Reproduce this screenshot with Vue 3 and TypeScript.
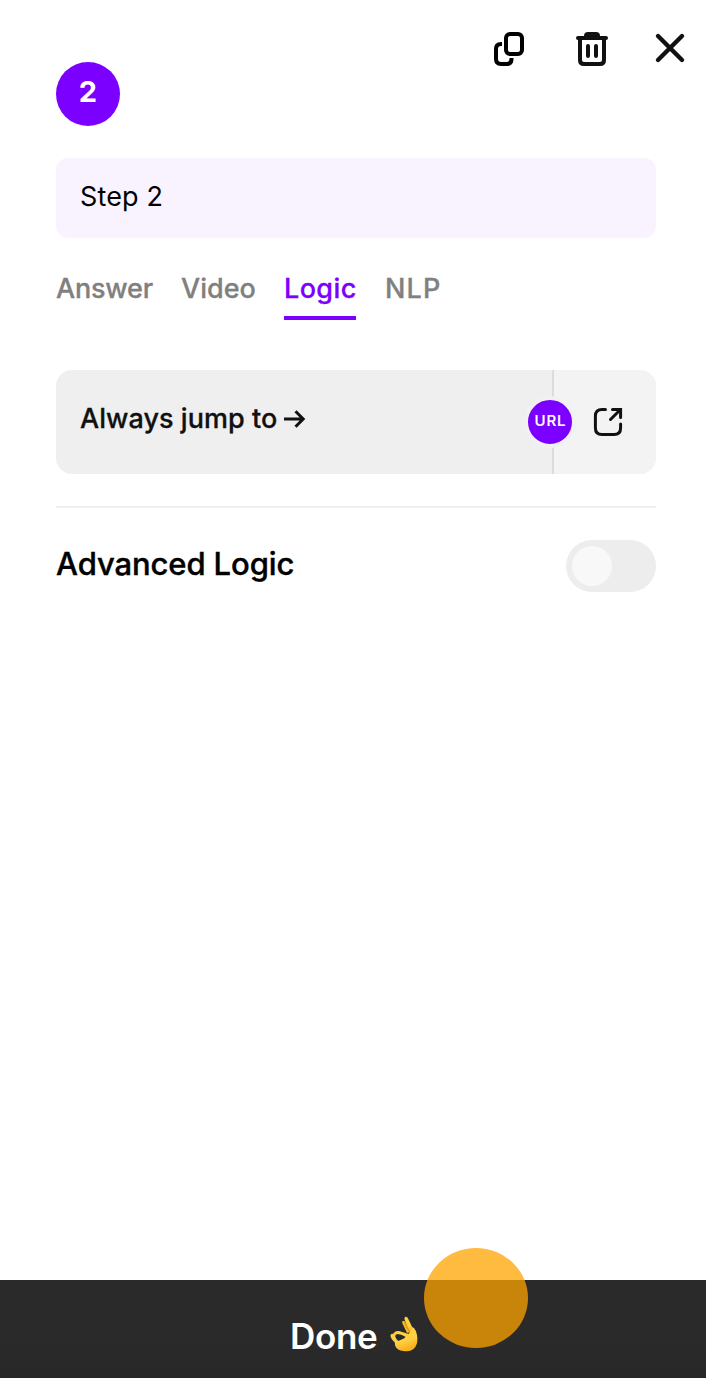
<script setup lang="ts">
import { ref } from 'vue'

const tabs = ['Answer', 'Video', 'Logic', 'NLP']
const activeTab = ref('Logic')
const stepName = ref('Step 2')
const advanced = ref(false)
</script>

<template>
  <main class="panel">
    <header class="toolbar">
      <button class="tool copy" aria-label="Duplicate">
        <svg width="32" height="36" viewBox="0 0 32 36" fill="none" stroke="#000" stroke-width="4">
          <rect x="13" y="3" width="16" height="20" rx="4" />
          <path d="M9 13H8Q3 13 3 18V28Q3 33 8 33H13.5Q18.5 33 18.5 28V27" />
        </svg>
      </button>
      <button class="tool trash" aria-label="Delete">
        <svg width="32" height="36" viewBox="0 0 32 36" fill="none" stroke="#111" stroke-width="4">
          <path d="M8 5Q8 1 12 1H20Q24 1 24 5V8H8Z" fill="#111" stroke="none" />
          <path d="M2 7H30" stroke-linecap="round" />
          <path d="M4 7V29Q4 33 8 33H24Q28 33 28 29V7" />
          <path d="M12 15V25M20 15V25" stroke-linecap="round" />
        </svg>
      </button>
      <button class="tool close" aria-label="Close">
        <svg width="32" height="32" viewBox="0 0 32 32" fill="none" stroke="#111" stroke-width="4.4" stroke-linecap="round">
          <path d="M4 4L28 28M28 4L4 28" />
        </svg>
      </button>
    </header>

    <section class="content">
      <div class="step-number"><span>2</span></div>
      <div class="step-name"><span>{{ stepName }}</span></div>

      <nav class="tabs">
        <button
          v-for="tab in tabs"
          :key="tab"
          class="tab"
          :class="[tab.toLowerCase(), { active: tab === activeTab }]"
          @click="activeTab = tab"
        >{{ tab }}</button>
      </nav>

      <div class="jump">
        <div class="jump-label">
          <span>Always jump to</span>
          <svg width="22" height="20" viewBox="0 0 22 20" fill="none" stroke="#111" stroke-width="3">
            <path d="M0 10H19M11.5 2.3L19.2 10L11.5 17.7" />
          </svg>
        </div>
        <div class="jump-target">
          <span class="url"><span>URL</span></span>
          <svg class="external" width="32" height="32" viewBox="0 0 32 32" fill="none" stroke="#111" stroke-width="3" stroke-linecap="round">
            <path d="M13.5 3.4H10Q3.4 3.4 3.4 10V22Q3.4 28.6 10 28.6H22Q28.6 28.6 28.6 22V18" />
            <path d="M20.5 3.4H28.6V11.5M28 4L18.5 13.5" />
          </svg>
        </div>
      </div>

      <div class="advanced">
        <span class="advanced-label">Advanced Logic</span>
        <button class="switch" role="switch" :aria-checked="advanced" aria-label="Advanced Logic" @click="advanced = !advanced">
          <span class="knob"></span>
        </button>
      </div>
    </section>

    <footer class="done">
      <span class="done-label">Done</span>
      <svg class="hand" width="28" height="36" viewBox="0 0 28 36">
        <defs>
          <linearGradient id="skin" x1="0" y1="0" x2="0.4" y2="1">
            <stop offset="0" stop-color="#ffd238" />
            <stop offset="0.65" stop-color="#ffd044" />
            <stop offset="1" stop-color="#f9b01f" />
          </linearGradient>
        </defs>
        <path d="M17 17L12.2 7Q11.6 5 13.2 4.8Q14.6 4.8 16 7L21 16Z" fill="#f5b622" />
        <path d="M20.5 17L14.7 4Q14 1 15.8.8Q17.5.6 18.8 4L25 17Z" fill="url(#skin)" />
        <path
          fill="url(#skin)"
          fill-rule="evenodd"
          d="M18.5 18Q21.5 15 21.5 12Q22 10.5 24 12Q26.5 15 27 19Q28 25 26.5 28.5Q24.5 35 17 35.2Q10 35.5 6.5 32Q4.8 30 4.8 26.5Q.5 22.5 .5 19.5Q.8 17.4 3 18Q5 14.5 9 15L18.5 18ZM7.5 18Q5 18.2 5.2 20.2Q5.8 23 8.4 25L11.5 23.5Q14.5 23 15.5 20.8Q11 18 7.5 18Z"
        />
        <path d="M14.7 6.5L19.5 16M3.4 18.2Q4 17 4.5 16.6" stroke="#df8a14" stroke-width="1" fill="none" />
      </svg>
      <span class="pointer"></span>
    </footer>
  </main>
</template>

<style>
body {
  margin: 0;
  background: #fff;
}
</style>

<style scoped>
.panel {
  width: 706px;
  height: 1378px;
  display: flex;
  flex-direction: column;
  overflow: hidden;
  background: #fff;
  color: #000;
  font-family: Inter, "Liberation Sans", sans-serif;
}
button {
  border: 0;
  padding: 0;
  margin: 0;
  background: none;
  font: inherit;
  color: inherit;
}
svg {
  display: block;
  flex: none;
}
.toolbar {
  height: 62px;
  box-sizing: border-box;
  padding: 31px 20px 0 0;
  display: flex;
  justify-content: flex-end;
  align-items: flex-start;
}
.copy {
  margin-right: 51px;
}
.trash {
  margin-right: 46px;
}
.close {
  margin-top: 1px;
}
.content {
  flex: 1;
  padding: 0 50px 0 56px;
}
.step-number {
  width: 64px;
  height: 64px;
  border-radius: 50%;
  background: #7b00ff;
  color: #fff;
  text-align: center;
  font-size: 29px;
  line-height: 60px;
  font-weight: 700;
}
.step-name {
  height: 80px;
  margin-top: 32px;
  padding-left: 24px;
  border-radius: 12px;
  background: #f8f3ff;
  font-size: 27px;
  line-height: 78px;
  letter-spacing: 0.15px;
}
.tabs {
  display: flex;
  gap: 28px;
  height: 60px;
  margin-top: 22px;
}
.tab {
  height: 60px;
  box-sizing: border-box;
  border-bottom: 4px solid transparent;
  color: #808080;
  font-size: 27px;
  line-height: 58px;
  font-weight: 500;
  -webkit-text-stroke: 0.3px currentColor;
  text-align: left;
  white-space: nowrap;
}
.tab.active {
  color: #7b00ff;
  border-color: #7b00ff;
}
.answer {
  width: 97px;
  letter-spacing: -0.2px;
}
.video {
  width: 75px;
}
.logic {
  width: 72px;
  letter-spacing: 0.4px;
}
.nlp {
  padding-left: 1px;
  letter-spacing: 1.1px;
}
.jump {
  display: flex;
  height: 104px;
  margin-top: 50px;
  border-radius: 16px;
  background: #efefef;
  overflow: hidden;
}
.jump-label {
  width: 472px;
  height: 97px;
  padding-left: 24px;
  display: flex;
  align-items: center;
  color: #111;
  font-size: 27px;
  font-weight: 500;
  -webkit-text-stroke: 0.3px currentColor;
  letter-spacing: 0.05px;
  white-space: nowrap;
}
.jump-label span {
  width: 204px;
}
.jump-target {
  flex: 1;
  display: flex;
  align-items: center;
  border-left: 2px solid #dcdcdc;
  background: #f3f3f3;
}
.url {
  flex: none;
  width: 44px;
  height: 44px;
  margin-left: -30px;
  border: 4px solid #f1f1f1;
  border-radius: 50%;
  background: #7b00ff;
  color: #fff;
  font-size: 15px;
  line-height: 42px;
  font-weight: 500;
  -webkit-text-stroke: 0.2px currentColor;
  letter-spacing: 0.8px;
  text-indent: 0.8px;
  text-align: center;
}
.external {
  margin-left: 16px;
}
.advanced {
  display: flex;
  justify-content: space-between;
  align-items: flex-start;
  margin-top: 32px;
  padding-top: 32px;
  border-top: 2px solid #efefef;
}
.advanced-label {
  font-size: 31px;
  line-height: 47px;
  font-weight: 500;
  -webkit-text-stroke: 0.4px currentColor;
  letter-spacing: -0.1px;
  white-space: nowrap;
}
.switch {
  width: 90px;
  height: 52px;
  padding: 6px;
  border-radius: 26px;
  background: #ededed;
}
.knob {
  display: block;
  width: 40px;
  height: 40px;
  border-radius: 50%;
  background: #f8f8f8;
}
.done {
  position: relative;
  height: 98px;
  box-sizing: border-box;
  padding: 0 0 0 290px;
  display: flex;
  background: linear-gradient(#2a2a2a 65%, #272727);
  color: #fff;
}
.done-label {
  width: 100px;
  font-size: 35px;
  line-height: 112px;
  font-weight: 600;
  letter-spacing: -0.3px;
}
.hand {
  margin-top: 36px;
}
.pointer {
  position: absolute;
  left: 424px;
  top: -32px;
  width: 104px;
  height: 100px;
  border-radius: 50%;
  background: rgba(255, 163, 0, 0.75);
}
</style>
